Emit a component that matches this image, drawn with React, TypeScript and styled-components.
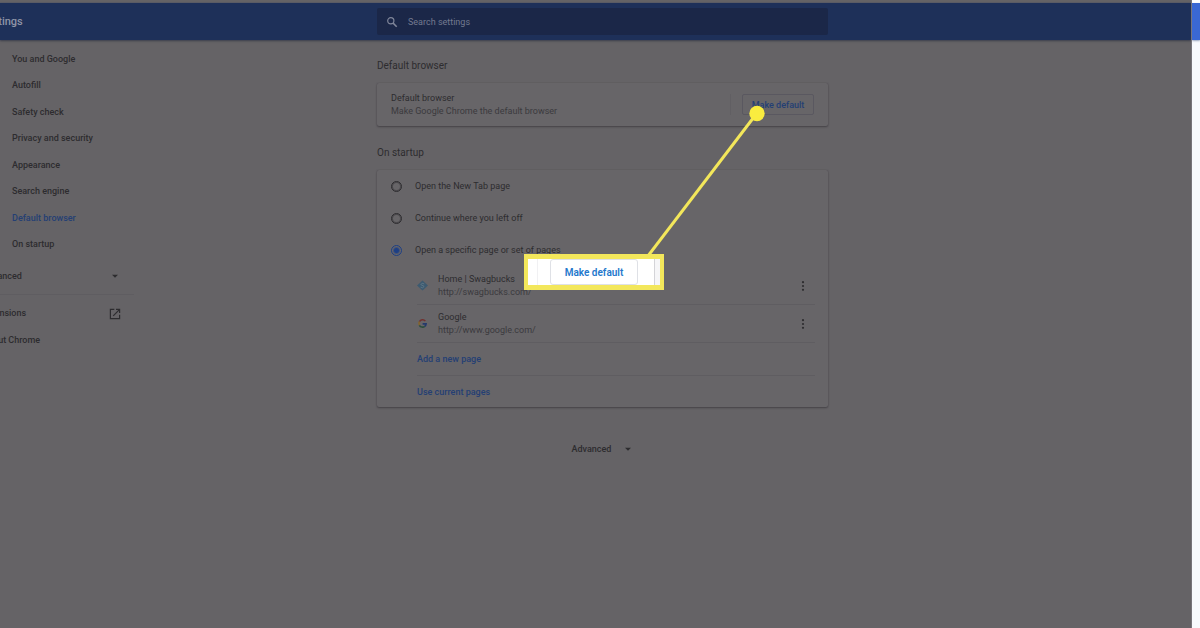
import React from "react";
import styled, { createGlobalStyle, css } from "styled-components";

const c = {
  shade: "#656366",
  card: "#676568",
  header: "#1e3059",
  search: "#1b2748",
  text: "#2d2c2f",
  muted: "#3b3a3e",
  blue: "#243f74",
  line: "#5f5d61",
  yellow: "#f3e75b",
};

const Global = createGlobalStyle`
  * { box-sizing: border-box; }
  body { margin: 0; background: #f8fafd; }
  body, button, input { font-family: Roboto, "Liberation Sans", sans-serif; font-size: 9px; }
  button { cursor: pointer; }
`;

const columns = css`
  display: grid;
  grid-template-columns: 377fr 451fr 363fr;
`;

const Page = styled.div`
  display: grid;
  grid-template-columns: minmax(0, 1fr) 8px;
  min-height: 100vh;
`;

const Dimmed = styled.div`
  position: relative;
  background: ${c.shade};
  color: ${c.text};
  border-right: 1px solid #77757a;
  overflow: hidden;
`;

const Edge = styled.div`
  border-top: 3px solid #fff;
  &::before {
    content: "";
    display: block;
    height: 37px;
    background: #3a68d4;
    box-shadow: 0 1px 2px #9aa6c0;
  }
`;

const Header = styled.header`
  ${columns}
  align-items: center;
  height: 37px;
  margin-top: 3px;
  background: ${c.header};
  box-shadow: 0 1px 2px #3d3e4a, 0 0 1px #35497a;
`;

const Title = styled.h1`
  margin: 0 0 0 -18px;
  font-size: 11px;
  line-height: 16px;
  font-weight: 500;
  color: #8f94a6;
`;

const Search = styled.label`
  display: flex;
  align-items: center;
  gap: 10px;
  height: 27px;
  padding: 0 9px;
  border-radius: 2px;
  background: ${c.search};
  color: #80869a;
`;

const SearchInput = styled.input`
  flex: 1;
  min-width: 0;
  padding: 0;
  border: 0;
  outline: 0;
  background: transparent;
  color: inherit;
  &::placeholder { color: #737a90; opacity: 1; }
`;

const Body = styled.div`
  ${columns}
`;

const Sidebar = styled.aside`
  width: 134px;
  padding-top: 6px;
  font-weight: 500;
  line-height: 13px;
`;

const NavList = styled.nav`
  display: flex;
  flex-direction: column;
  height: 212px;
`;

const NavLink = styled.a<{ $active?: boolean }>`
  display: flex;
  flex: 1;
  align-items: center;
  padding-left: 12px;
  text-decoration: none;
  color: ${(p) => (p.$active ? c.blue : c.text)};
`;

const SideButton = styled.button`
  display: flex;
  align-items: center;
  justify-content: space-between;
  width: 152px;
  height: 36px;
  margin-left: -18px;
  padding: 0 14px 0 0;
  border: 0;
  background: none;
  color: inherit;
  font-weight: 500;
`;

const SideFooter = styled.div`
  padding-top: 5px;
  border-top: 1px solid ${c.line};
`;

const SideLink = styled.a`
  display: flex;
  align-items: center;
  justify-content: space-between;
  height: 27px;
  margin-left: -18px;
  padding-right: 13px;
  color: inherit;
  text-decoration: none;
`;

const Main = styled.main`
  position: relative;
  display: flex;
  flex-direction: column;
  gap: 17px;
  padding-top: 16px;
`;

const Heading = styled.h2`
  margin: 0 0 8px;
  font-size: 10px;
  line-height: 19px;
  font-weight: 400;
`;

const Card = styled.div`
  border-radius: 2px;
  background: ${c.card};
  box-shadow: 0 1px 2px #444246, 0 0 1px #4c4a4e;
`;

const DefaultRow = styled.div`
  display: flex;
  align-items: center;
  justify-content: space-between;
  height: 43px;
  padding: 0 14px;
`;

const Lines = styled.div`
  flex: 1;
  line-height: 13px;
`;

const Sub = styled.div`
  color: ${c.muted};
`;

const ActionSlot = styled.div`
  display: flex;
  align-items: center;
  height: 21px;
  padding-left: 11px;
  border-left: 1px solid #615f63;
`;

const OutlineButton = styled.button`
  height: 21px;
  width: 72px;
  padding: 0;
  border: 1px solid #5a5860;
  border-radius: 2px;
  background: none;
  color: ${c.blue};
  font-weight: 500;
`;

const RadioLabel = styled.label`
  display: flex;
  align-items: center;
  gap: 13px;
  height: 32px;
  padding-left: 14px;
`;

const Radio = styled.input`
  appearance: none;
  width: 11px;
  height: 11px;
  margin: 0;
  border: 1px solid ${c.text};
  border-radius: 50%;
  box-shadow: inset 0 0 0 1px #4a484c;
  &:checked {
    border-color: #1d3f85;
    background: radial-gradient(circle, #1d3f85 2px, transparent 4px);
    box-shadow: none;
  }
`;

const Pages = styled.div`
  padding: 1px 13px 0 40px;
`;

const PageRow = styled.div`
  display: flex;
  align-items: center;
  gap: 10px;
  height: 38px;
  border-bottom: 1px solid ${c.line};
`;

const MoreButton = styled.button`
  display: flex;
  width: 24px;
  height: 20px;
  padding: 0;
  align-items: center;
  justify-content: center;
  border: 0;
  background: none;
  color: ${c.text};
`;

const LinkRow = styled.div<{ $last?: boolean }>`
  display: flex;
  align-items: center;
  height: ${(p) => (p.$last ? 31 : 33)}px;
  border-bottom: ${(p) => (p.$last ? "0" : `1px solid ${c.line}`)};
`;

const TextButton = styled.button`
  padding: 0;
  border: 0;
  background: none;
  color: ${c.blue};
  font-weight: 500;
`;

const Advanced = styled.button`
  display: flex;
  align-items: center;
  align-self: center;
  gap: 12px;
  height: 24px;
  margin-top: 13px;
  padding: 0;
  border: 0;
  background: none;
  color: ${c.text};
  font-weight: 500;
`;

const Pointer = styled.svg`
  position: absolute;
  top: 65px;
  right: 60px;
  width: 130px;
  height: 155px;
  pointer-events: none;
`;

const Callout = styled.div`
  position: absolute;
  top: 214px;
  right: 164px;
  display: flex;
  justify-content: center;
  width: 140px;
  height: 36px;
  border: solid ${c.yellow};
  border-width: 5px 4px;
  background: linear-gradient(90deg, #fff 9px, #f1f1f3 9px 10px, #fff 10px 126px, #d4d4d8 126px 127px, #f6f6f8 127px);
`;

const CalloutButton = styled.button`
  width: 88px;
  height: 26px;
  padding: 0;
  border: 1px solid #dfe1e6;
  border-radius: 3px;
  background: #fff;
  color: #2478cc;
  font-size: 10px;
  font-weight: 600;
`;

const Caret = () => (
  <svg width="10" height="10" viewBox="0 0 10 10" aria-hidden="true">
    <path d="M2 3.8h6L5 6.8z" fill={c.text} />
  </svg>
);

const More = ({ label }: { label: string }) => (
  <MoreButton aria-label={label}>
    <svg width="4" height="12" viewBox="0 0 4 12" fill="currentColor" aria-hidden="true">
      <circle cx="2" cy="2.2" r="1.1" />
      <circle cx="2" cy="6" r="1.1" />
      <circle cx="2" cy="9.8" r="1.1" />
    </svg>
  </MoreButton>
);

const SwagbucksIcon = () => (
  <svg width="11" height="11" viewBox="0 0 11 11" aria-hidden="true">
    <path d="M5.5 0.5 11 5.5 5.5 10.5 0 5.5z" fill="#3d5a70" />
    <path d="M7.2 3.9 5.2 3.2 3.8 4.6 7.2 6.4 5.7 7.8 3.6 7.1" fill="none" stroke="#6a7f8c" strokeWidth="0.7" />
  </svg>
);

const GoogleIcon = () => (
  <svg width="11" height="11" viewBox="0 0 11 11" fill="none" strokeWidth="1.6" aria-hidden="true">
    <path d="M8.3 3A3.6 3.6 0 0 0 2.4 3.7" stroke="#71312f" />
    <path d="M2.4 3.7a3.6 3.6 0 0 0 0 3.6" stroke="#84642a" />
    <path d="M2.4 7.3a3.6 3.6 0 0 0 5.4 1" stroke="#2a4d3c" />
    <path d="M7.8 8.3A3.6 3.6 0 0 0 9.1 5.9H5.6" stroke="#243a6c" />
  </svg>
);

const nav = [
  "You and Google",
  "Autofill",
  "Safety check",
  "Privacy and security",
  "Appearance",
  "Search engine",
  "Default browser",
  "On startup",
];

const startup = ["Open the New Tab page", "Continue where you left off", "Open a specific page or set of pages"];

const pages = [
  { name: "Home | Swagbucks", url: "http://swagbucks.com/", icon: <SwagbucksIcon /> },
  { name: "Google", url: "http://www.google.com/", icon: <GoogleIcon /> },
];

export default function App() {
  return (
    <>
      <Global />
      <Page>
        <Dimmed>
          <Header>
            <Title>Settings</Title>
            <Search>
              <svg width="12" height="12" viewBox="0 0 12 12" fill="none" stroke="currentColor" aria-hidden="true">
                <circle cx="4.8" cy="4.8" r="3.1" strokeWidth="1.2" />
                <path d="M7.1 7.1 10.7 10.7" strokeWidth="1.5" />
              </svg>
              <SearchInput type="search" aria-label="Search settings" placeholder="Search settings" />
            </Search>
          </Header>
          <Body>
            <Sidebar>
              <NavList>
                {nav.map((item) => (
                  <NavLink key={item} href="#" $active={item === "Default browser"}>
                    {item}
                  </NavLink>
                ))}
              </NavList>
              <SideButton>
                Advanced
                <Caret />
              </SideButton>
              <SideFooter>
                <SideLink href="#">
                  Extensions
                  <svg width="12" height="12" viewBox="0 0 12 12" fill="none" stroke={c.text} strokeWidth="1.2" aria-hidden="true">
                    <path d="M5.3 1.4H1.4v9.2h9.2V6.7M7 1.4h3.6V5M10.4 1.6 4.2 7.8" />
                  </svg>
                </SideLink>
                <SideLink href="#">About Chrome</SideLink>
              </SideFooter>
            </Sidebar>
            <Main>
              <section>
                <Heading>Default browser</Heading>
                <Card>
                  <DefaultRow>
                    <Lines>
                      <div>Default browser</div>
                      <Sub>Make Google Chrome the default browser</Sub>
                    </Lines>
                    <ActionSlot>
                      <OutlineButton>Make default</OutlineButton>
                    </ActionSlot>
                  </DefaultRow>
                </Card>
              </section>
              <section>
                <Heading>On startup</Heading>
                <Card>
                  {startup.map((option, i) => (
                    <RadioLabel key={option}>
                      <Radio type="radio" name="startup" defaultChecked={i === 2} />
                      {option}
                    </RadioLabel>
                  ))}
                  <Pages>
                    {pages.map((page) => (
                      <PageRow key={page.url}>
                        {page.icon}
                        <Lines>
                          <div>{page.name}</div>
                          <Sub>{page.url}</Sub>
                        </Lines>
                        <More label={`More actions for ${page.name}`} />
                      </PageRow>
                    ))}
                    <LinkRow>
                      <TextButton>Add a new page</TextButton>
                    </LinkRow>
                    <LinkRow $last>
                      <TextButton>Use current pages</TextButton>
                    </LinkRow>
                  </Pages>
                </Card>
              </section>
              <Advanced>
                Advanced
                <Caret />
              </Advanced>
              <Pointer viewBox="0 0 130 155" aria-hidden="true">
                <path d="M119 8 10 151" stroke={c.yellow} strokeWidth="3" />
                <circle cx="119" cy="8.5" r="7.7" fill="#f9ec3f" />
              </Pointer>
              <Callout>
                <CalloutButton>Make default</CalloutButton>
              </Callout>
            </Main>
          </Body>
        </Dimmed>
        <Edge />
      </Page>
    </>
  );
}
